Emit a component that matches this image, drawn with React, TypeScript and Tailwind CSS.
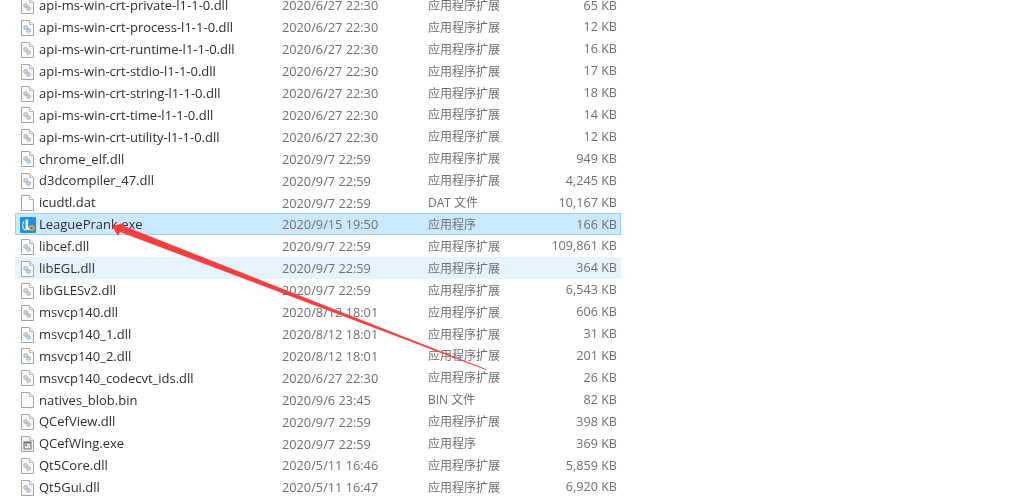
const D = "应用程序扩展";
const rows: [string, string, string, string, string, string?][] = [
  ["api-ms-win-crt-private-l1-1-0.dll", "2020/6/27 22:30", D, "65 KB", "dll"],
  ["api-ms-win-crt-process-l1-1-0.dll", "2020/6/27 22:30", D, "12 KB", "dll"],
  ["api-ms-win-crt-runtime-l1-1-0.dll", "2020/6/27 22:30", D, "16 KB", "dll"],
  ["api-ms-win-crt-stdio-l1-1-0.dll", "2020/6/27 22:30", D, "17 KB", "dll"],
  ["api-ms-win-crt-string-l1-1-0.dll", "2020/6/27 22:30", D, "18 KB", "dll"],
  ["api-ms-win-crt-time-l1-1-0.dll", "2020/6/27 22:30", D, "14 KB", "dll"],
  ["api-ms-win-crt-utility-l1-1-0.dll", "2020/6/27 22:30", D, "12 KB", "dll"],
  ["chrome_elf.dll", "2020/9/7 22:59", D, "949 KB", "dll"],
  ["d3dcompiler_47.dll", "2020/9/7 22:59", D, "4,245 KB", "dll"],
  ["icudtl.dat", "2020/9/7 22:59", "DAT 文件", "10,167 KB", "file"],
  ["LeaguePrank.exe", "2020/9/15 19:50", "应用程序", "166 KB", "app", "sel"],
  ["libcef.dll", "2020/9/7 22:59", D, "109,861 KB", "dll"],
  ["libEGL.dll", "2020/9/7 22:59", D, "364 KB", "dll", "hover"],
  ["libGLESv2.dll", "2020/9/7 22:59", D, "6,543 KB", "dll"],
  ["msvcp140.dll", "2020/8/12 18:01", D, "606 KB", "dll"],
  ["msvcp140_1.dll", "2020/8/12 18:01", D, "31 KB", "dll"],
  ["msvcp140_2.dll", "2020/8/12 18:01", D, "201 KB", "dll"],
  ["msvcp140_codecvt_ids.dll", "2020/6/27 22:30", D, "26 KB", "dll"],
  ["natives_blob.bin", "2020/9/6 23:45", "BIN 文件", "82 KB", "file"],
  ["QCefView.dll", "2020/9/7 22:59", D, "398 KB", "dll"],
  ["QCefWing.exe", "2020/9/7 22:59", "应用程序", "369 KB", "exe"],
  ["Qt5Core.dll", "2020/5/11 16:46", D, "5,859 KB", "dll"],
  ["Qt5Gui.dll", "2020/5/11 16:47", D, "6,920 KB", "dll"],
];

function Icon({ kind }: { kind: string }) {
  if (kind === "app")
    return (
      <svg width="16" height="16" viewBox="0 0 16 16">
        <rect x="0" y="0" width="16" height="16" rx="1" fill="#1f8fe8" />
        <path d="M5.5 2.5h2.6v8h2.4V13H5.5z" fill="#fff" />
        <path d="M4 4.5 A6 6 0 0 0 5.5 13.5" fill="none" stroke="#d5ecfc" strokeWidth="1.2" />
        <circle cx="11.8" cy="11" r="2.8" fill="#f0a733" />
        <circle cx="11.8" cy="11" r="1" fill="#6d4a12" />
      </svg>
    );
  return (
    <svg width="13" height="16" viewBox="0 0 13 16">
      <path d="M.5 .5h8l4 4v11h-12z" fill={kind === "exe" ? "#f4f4f4" : "#fbfbfb"} stroke="#a3a3a3" />
      <path d="M8.5 .5v4h4" fill="#eee" stroke="#b8b8b8" />
      {kind === "dll" && (
        <>
          <circle cx="4.6" cy="7.5" r="2" fill="#d2d2d2" stroke="#9aa3ab" strokeWidth=".7" />
          <circle cx="7.6" cy="10.5" r="1.9" fill="#c3d5e6" stroke="#8ba3b8" strokeWidth=".7" />
        </>
      )}
      {kind === "exe" && (
        <>
          <rect x="2.5" y="5.5" width="8" height="8" fill="#6f6f6f" />
          <rect x="3.5" y="7.5" width="6" height="5" fill="#e6e6e6" />
          <rect x="4.5" y="8.5" width="1.5" height="1.5" fill="#555" />
        </>
      )}
    </svg>
  );
}

export default function App() {
  return (
    <div className="relative h-[500px] w-[1024px] overflow-hidden bg-white font-['Open_Sans','Noto_Sans_CJK_SC',sans-serif]">
      <div className="ml-[15px] mt-[-6px] w-[606px] blur-[0.4px]">
        {rows.map(([name, date, type, size, kind, state]) => (
          <div
            key={name}
            className={`flex h-[21.91px] items-center border pt-[2px] ${
              state === "sel"
                ? "border-[#99d1ff] bg-[#cce8ff]"
                : state === "hover"
                  ? "border-[#e5f3ff] bg-[#e5f3ff]"
                  : "border-transparent"
            }`}
          >
            <div className="flex w-[23px] shrink-0 justify-center">
              <Icon kind={kind} />
            </div>
            <div className="w-[243px] shrink-0 truncate text-[13px] text-[#2e2e2e]">{name}</div>
            <div className="w-[146px] shrink-0 text-[12.75px] text-[#6f6f6f]">{date}</div>
            <div className="w-[100px] shrink-0 text-[12px] text-[#6f6f6f]">{type}</div>
            <div className="flex-1 pr-[3px] text-right text-[12.6px] text-[#6f6f6f]">{size}</div>
          </div>
        ))}
      </div>
      <svg className="absolute left-0 top-0" width="1024" height="500" viewBox="0 0 1024 500">
        <path d="M112 226 L124 223 L124 226 L487 369.5 L486 370 L120 232 L118 236 Z" fill="#f73f3f" />
      </svg>
    </div>
  );
}
